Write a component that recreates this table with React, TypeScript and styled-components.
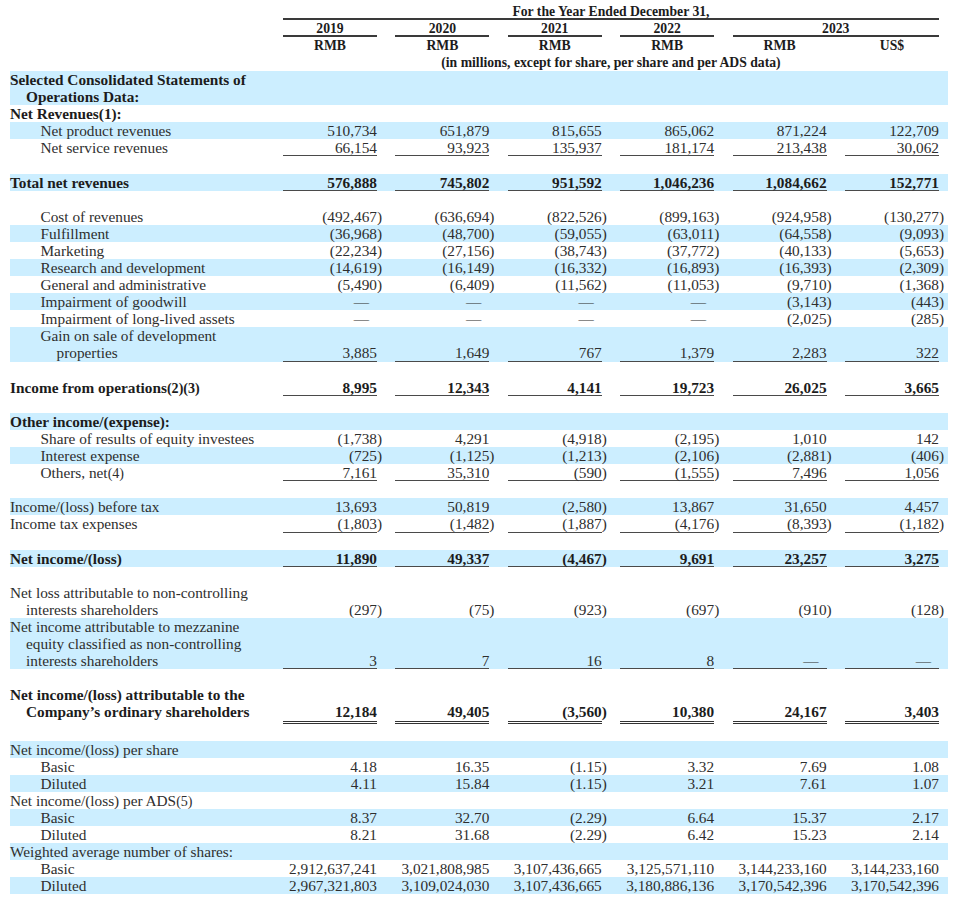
import React from "react";
import styled, { createGlobalStyle } from "styled-components";

const GlobalStyle = createGlobalStyle`
  html, body { margin: 0; padding: 0; background: #ffffff; }
  body {
    font-family: "Liberation Serif", "Times New Roman", serif;
    font-size: 15.3px;
    color: #2a2a2a;
  }
`;

type Rule = "single" | "double";

const PITCH = "17.1px";

const Page = styled.div`
  padding: 2.6px 0 8px 10px;
`;

const Table = styled.div`
  width: 938px;
  display: flex;
  flex-direction: column;
`;

const Row = styled.div<{ $blue?: boolean; $bold?: boolean; $double?: boolean }>`
  display: grid;
  grid-template-columns: 254.6px repeat(6, 94px);
  column-gap: 18.4px;
  padding-right: 9px;
  padding-bottom: ${(p) => (p.$double ? 3 : 0)}px;
  line-height: ${PITCH};
  background: ${(p) => (p.$blue ? "#cceeff" : "transparent")};
  font-weight: ${(p) => (p.$bold ? 700 : 400)};
  color: ${(p) => (p.$bold ? "#1c1c1c" : "#2e2e2e")};
`;

const HeadRow = styled(Row)`
  font-size: 13.7px;
`;

const Spacer = styled.div`
  height: ${PITCH};
`;

const HeadCell = styled.div<{ $col: number; $span?: number; $rule?: boolean }>`
  grid-column: ${(p) => p.$col} / span ${(p) => p.$span ?? 1};
  text-align: center;
  font-weight: 700;
  color: #1c1c1c;
  white-space: nowrap;
  box-shadow: ${(p) => (p.$rule ? "inset 0 -2px 0 #3a3a3a" : "none")};
`;

const Label = styled.div<{ $indent: number }>`
  grid-column: 1;
  padding-left: ${(p) => p.$indent}px;
`;

const LabelLine = styled.div<{ $cont?: boolean }>`
  padding-left: ${(p) => (p.$cont ? 16 : 0)}px;
  white-space: nowrap;
`;

const Value = styled.div<{ $rule?: Rule }>`
  align-self: end;
  text-align: right;
  white-space: nowrap;
  box-shadow: ${(p) =>
    p.$rule === "double"
      ? "0 1px 0 #333, 0 2px 0 #fff, 0 3px 0 #333"
      : p.$rule === "single"
      ? "inset 0 -1px 0 #4a4a4a"
      : "none"};
`;

const Paren = styled.span`
  margin-right: -5.1px;
`;

const Dash = styled.span`
  display: inline-block;
  margin-right: 8px;
`;

const Fn = styled.span`
  font-size: 0.92em;
  line-height: 1;
`;

type DataRow =
  | { spacer: true }
  | {
      spacer?: false;
      label: React.ReactNode[];
      indent?: number;
      bold?: boolean;
      blue?: boolean;
      values?: string[];
      rule?: Rule;
    };

const v = (s: string) => s.split(" ");
const IN = 30.5;

const rows: DataRow[] = [
  { label: ["Selected Consolidated Statements of", "Operations Data:"], bold: true, blue: true },
  { label: ["Net Revenues(1):"], bold: true },
  { label: ["Net product revenues"], indent: IN, blue: true, values: v("510,734 651,879 815,655 865,062 871,224 122,709") },
  { label: ["Net service revenues"], indent: IN, values: v("66,154 93,923 135,937 181,174 213,438 30,062"), rule: "single" },
  { spacer: true },
  { label: ["Total net revenues"], bold: true, blue: true, values: v("576,888 745,802 951,592 1,046,236 1,084,662 152,771"), rule: "single" },
  { spacer: true },
  { label: ["Cost of revenues"], indent: IN, values: v("(492,467) (636,694) (822,526) (899,163) (924,958) (130,277)") },
  { label: ["Fulfillment"], indent: IN, blue: true, values: v("(36,968) (48,700) (59,055) (63,011) (64,558) (9,093)") },
  { label: ["Marketing"], indent: IN, values: v("(22,234) (27,156) (38,743) (37,772) (40,133) (5,653)") },
  { label: ["Research and development"], indent: IN, blue: true, values: v("(14,619) (16,149) (16,332) (16,893) (16,393) (2,309)") },
  { label: ["General and administrative"], indent: IN, values: v("(5,490) (6,409) (11,562) (11,053) (9,710) (1,368)") },
  { label: ["Impairment of goodwill"], indent: IN, blue: true, values: v("— — — — (3,143) (443)") },
  { label: ["Impairment of long-lived assets"], indent: IN, values: v("— — — — (2,025) (285)") },
  { label: ["Gain on sale of development", "properties"], indent: IN, blue: true, values: v("3,885 1,649 767 1,379 2,283 322"), rule: "single" },
  { spacer: true },
  { label: [<>Income from operations<Fn>(2)(3)</Fn></>], bold: true, values: v("8,995 12,343 4,141 19,723 26,025 3,665"), rule: "single" },
  { spacer: true },
  { label: ["Other income/(expense):"], bold: true, blue: true },
  { label: ["Share of results of equity investees"], indent: IN, values: v("(1,738) 4,291 (4,918) (2,195) 1,010 142") },
  { label: ["Interest expense"], indent: IN, blue: true, values: v("(725) (1,125) (1,213) (2,106) (2,881) (406)") },
  { label: [<>Others, net<Fn>(4)</Fn></>], indent: IN, values: v("7,161 35,310 (590) (1,555) 7,496 1,056"), rule: "single" },
  { spacer: true },
  { label: ["Income/(loss) before tax"], blue: true, values: v("13,693 50,819 (2,580) 13,867 31,650 4,457") },
  { label: ["Income tax expenses"], values: v("(1,803) (1,482) (1,887) (4,176) (8,393) (1,182)"), rule: "single" },
  { spacer: true },
  { label: ["Net income/(loss)"], bold: true, blue: true, values: v("11,890 49,337 (4,467) 9,691 23,257 3,275"), rule: "single" },
  { spacer: true },
  { label: ["Net loss attributable to non-controlling", "interests shareholders"], values: v("(297) (75) (923) (697) (910) (128)") },
  { label: ["Net income attributable to mezzanine", "equity classified as non-controlling", "interests shareholders"], blue: true, values: v("3 7 16 8 — —"), rule: "single" },
  { spacer: true },
  { label: ["Net income/(loss) attributable to the", "Company’s ordinary shareholders"], bold: true, values: v("12,184 49,405 (3,560) 10,380 24,167 3,403"), rule: "double" },
  { spacer: true },
  { label: ["Net income/(loss) per share"], blue: true },
  { label: ["Basic"], indent: IN, values: v("4.18 16.35 (1.15) 3.32 7.69 1.08") },
  { label: ["Diluted"], indent: IN, blue: true, values: v("4.11 15.84 (1.15) 3.21 7.61 1.07") },
  { label: [<>Net income/(loss) per ADS<Fn>(5)</Fn></>] },
  { label: ["Basic"], indent: IN, blue: true, values: v("8.37 32.70 (2.29) 6.64 15.37 2.17") },
  { label: ["Diluted"], indent: IN, values: v("8.21 31.68 (2.29) 6.42 15.23 2.14") },
  { label: ["Weighted average number of shares:"], blue: true },
  { label: ["Basic"], indent: IN, values: v("2,912,637,241 3,021,808,985 3,107,436,665 3,125,571,110 3,144,233,160 3,144,233,160") },
  { label: ["Diluted"], indent: IN, blue: true, values: v("2,967,321,803 3,109,024,030 3,107,436,665 3,180,886,136 3,170,542,396 3,170,542,396") },
];

function Amount({ text }: { text: string }) {
  if (text === "—") return <Dash>—</Dash>;
  if (text.endsWith(")")) {
    return (
      <>
        {text.slice(0, -1)}
        <Paren>)</Paren>
      </>
    );
  }
  return <>{text}</>;
}

function Header() {
  const years = ["2019", "2020", "2021", "2022"];
  return (
    <>
      <HeadRow>
        <HeadCell $col={2} $span={6} $rule>
          For the Year Ended December 31,
        </HeadCell>
      </HeadRow>
      <HeadRow>
        {years.map((y, i) => (
          <HeadCell key={y} $col={i + 2} $rule>
            {y}
          </HeadCell>
        ))}
        <HeadCell $col={6} $span={2} $rule>
          2023
        </HeadCell>
      </HeadRow>
      <HeadRow>
        {["RMB", "RMB", "RMB", "RMB", "RMB", "US$"].map((c, i) => (
          <HeadCell key={i} $col={i + 2}>
            {c}
          </HeadCell>
        ))}
      </HeadRow>
      <HeadRow>
        <HeadCell $col={2} $span={6}>
          (in millions, except for share, per share and per ADS data)
        </HeadCell>
      </HeadRow>
    </>
  );
}

export default function App() {
  return (
    <>
      <GlobalStyle />
      <Page>
        <Table>
          <Header />
          {rows.map((r, i) => {
            if (r.spacer) return <Spacer key={i} />;
            return (
              <Row key={i} $blue={r.blue} $bold={r.bold} $double={r.rule === "double"}>
                <Label $indent={r.indent ?? 0}>
                  {r.label.map((l, j) => (
                    <LabelLine key={j} $cont={j > 0}>
                      {l}
                    </LabelLine>
                  ))}
                </Label>
                {r.values?.map((val, k) => (
                  <Value key={k} $rule={r.rule}>
                    <Amount text={val} />
                  </Value>
                ))}
              </Row>
            );
          })}
        </Table>
      </Page>
    </>
  );
}
